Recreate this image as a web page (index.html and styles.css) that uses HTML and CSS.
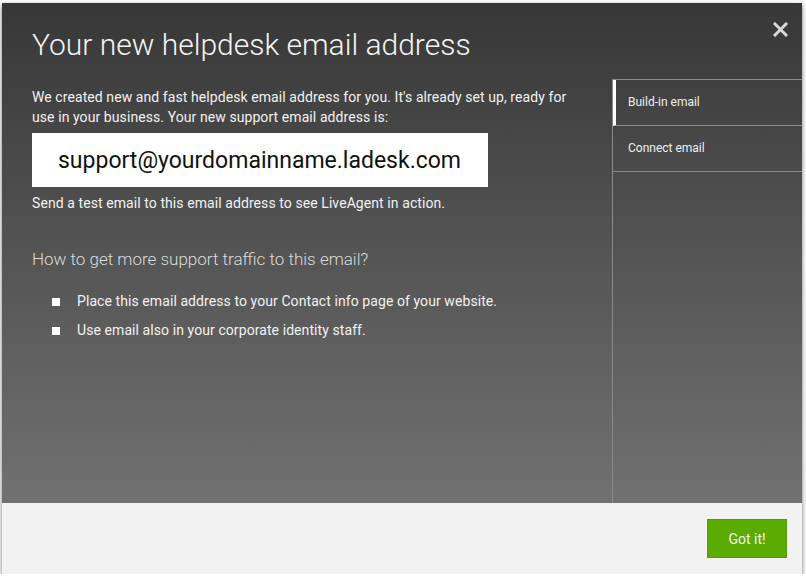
FILE: index.html
```html
<!doctype html>
<html lang="en">
  <head>
    <meta charset="UTF-8" />
    <meta name="viewport" content="width=device-width, initial-scale=1.0" />
    <title>Your new helpdesk email address</title>
    <link rel="stylesheet" href="styles.css">
  </head>
  <body>
    <div class="modal">
      <!-- Close button -->
      <button class="close" title="Close">
        <svg width="15" height="15" viewBox="0 0 15 15">
          <path d="M2 2 L13 13 M13 2 L2 13" stroke="#d9d9d9" stroke-width="3" stroke-linecap="square" fill="none" />
        </svg>
      </button>

      <div class="modal-body">
        <div class="content">
          <h1>Your new helpdesk email address</h1>
          <p class="intro">
            We created new and fast helpdesk email address for you. It's already set up, ready for
            use in your business. Your new support email address is:
          </p>
          <div class="address">support@yourdomainname.ladesk.com</div>
          <p class="note">Send a test email to this email address to see LiveAgent in action.</p>

          <h3>How to get more support traffic to this email?</h3>
          <ul class="tips">
            <li>Place this email address to your Contact info page of your website.</li>
            <li>Use email also in your corporate identity staff.</li>
          </ul>
        </div>

        <!-- Side menu -->
        <div class="side-menu">
          <div class="side-item active">Build-in email</div>
          <div class="side-item">Connect email</div>
        </div>
      </div>

      <div class="modal-footer">
        <button class="btn-ok">Got it!</button>
      </div>
    </div>
  </body>
</html>
```

FILE: styles.css
```css
body {
  margin: 0;
  font-family: Roboto, "Liberation Sans", Arial, sans-serif;
  background-color: #fff;
}
.modal {
  position: relative;
  width: 800px;
  height: 571px;
  margin: 3px 0 0 2px;
  display: flex;
  flex-direction: column;
  box-shadow: 0 2px 5px rgba(0, 0, 0, 0.55);
}
.close {
  position: absolute;
  top: 19px;
  right: 14px;
  width: 15px;
  height: 15px;
  padding: 0;
  border: none;
  background: none;
  cursor: pointer;
}
.close svg {
  display: block;
}
.modal-body {
  flex: 1;
  display: flex;
  background: linear-gradient(#373737, #717171);
  color: #f2f2f2;
}
.content {
  flex: 1;
  padding: 23px 30px 0 30px;
}
h1 {
  margin: 0;
  font-size: 30px;
  font-weight: 300;
  line-height: 38px;
  color: #f4f4f4;
}
.intro {
  margin: 23px 0 0;
  font-size: 14px;
  line-height: 20px;
  letter-spacing: 0.08px;
}
.address {
  display: inline-block;
  margin-top: 6px;
  padding: 1px 27px 0 26px;
  height: 53px;
  line-height: 53px;
  background-color: #fff;
  color: #111;
  font-size: 23px;
}
.note {
  margin: 6px 0 0;
  font-size: 14px;
  line-height: 20px;
  letter-spacing: 0.08px;
}
h3 {
  margin: 36px 0 0;
  font-size: 17px;
  font-weight: 300;
  line-height: 21px;
  color: #dcdcdc;
}
.tips {
  margin: 17px 0 0;
  padding: 0;
  list-style: none;
}
.tips li {
  position: relative;
  padding-left: 45px;
  font-size: 14px;
  line-height: 29px;
  letter-spacing: 0.08px;
}
.tips li::before {
  content: "";
  position: absolute;
  left: 20px;
  top: 11px;
  width: 8px;
  height: 8px;
  background-color: #fff;
}
.side-menu {
  width: 189px;
  margin-top: 76px;
  border-left: 1px solid #8a8a8a;
  border-top: 1px solid #8a8a8a;
}
.side-item {
  height: 45px;
  line-height: 45px;
  padding-left: 15px;
  border-bottom: 1px solid #8a8a8a;
  font-size: 12px;
  color: #f0f0f0;
}
.side-item.active {
  padding-left: 12px;
  border-left: 3px solid #fff;
}
.modal-footer {
  height: 71px;
  box-sizing: border-box;
  padding: 16px 15px;
  display: flex;
  justify-content: flex-end;
  background-color: #f2f2f2;
}
.btn-ok {
  width: 80px;
  height: 39px;
  border: 1px solid #519c00;
  background-color: #5aac00;
  color: #f4f4f4;
  font-family: Roboto, "Liberation Sans", Arial, sans-serif;
  font-size: 14px;
  cursor: pointer;
}
```
